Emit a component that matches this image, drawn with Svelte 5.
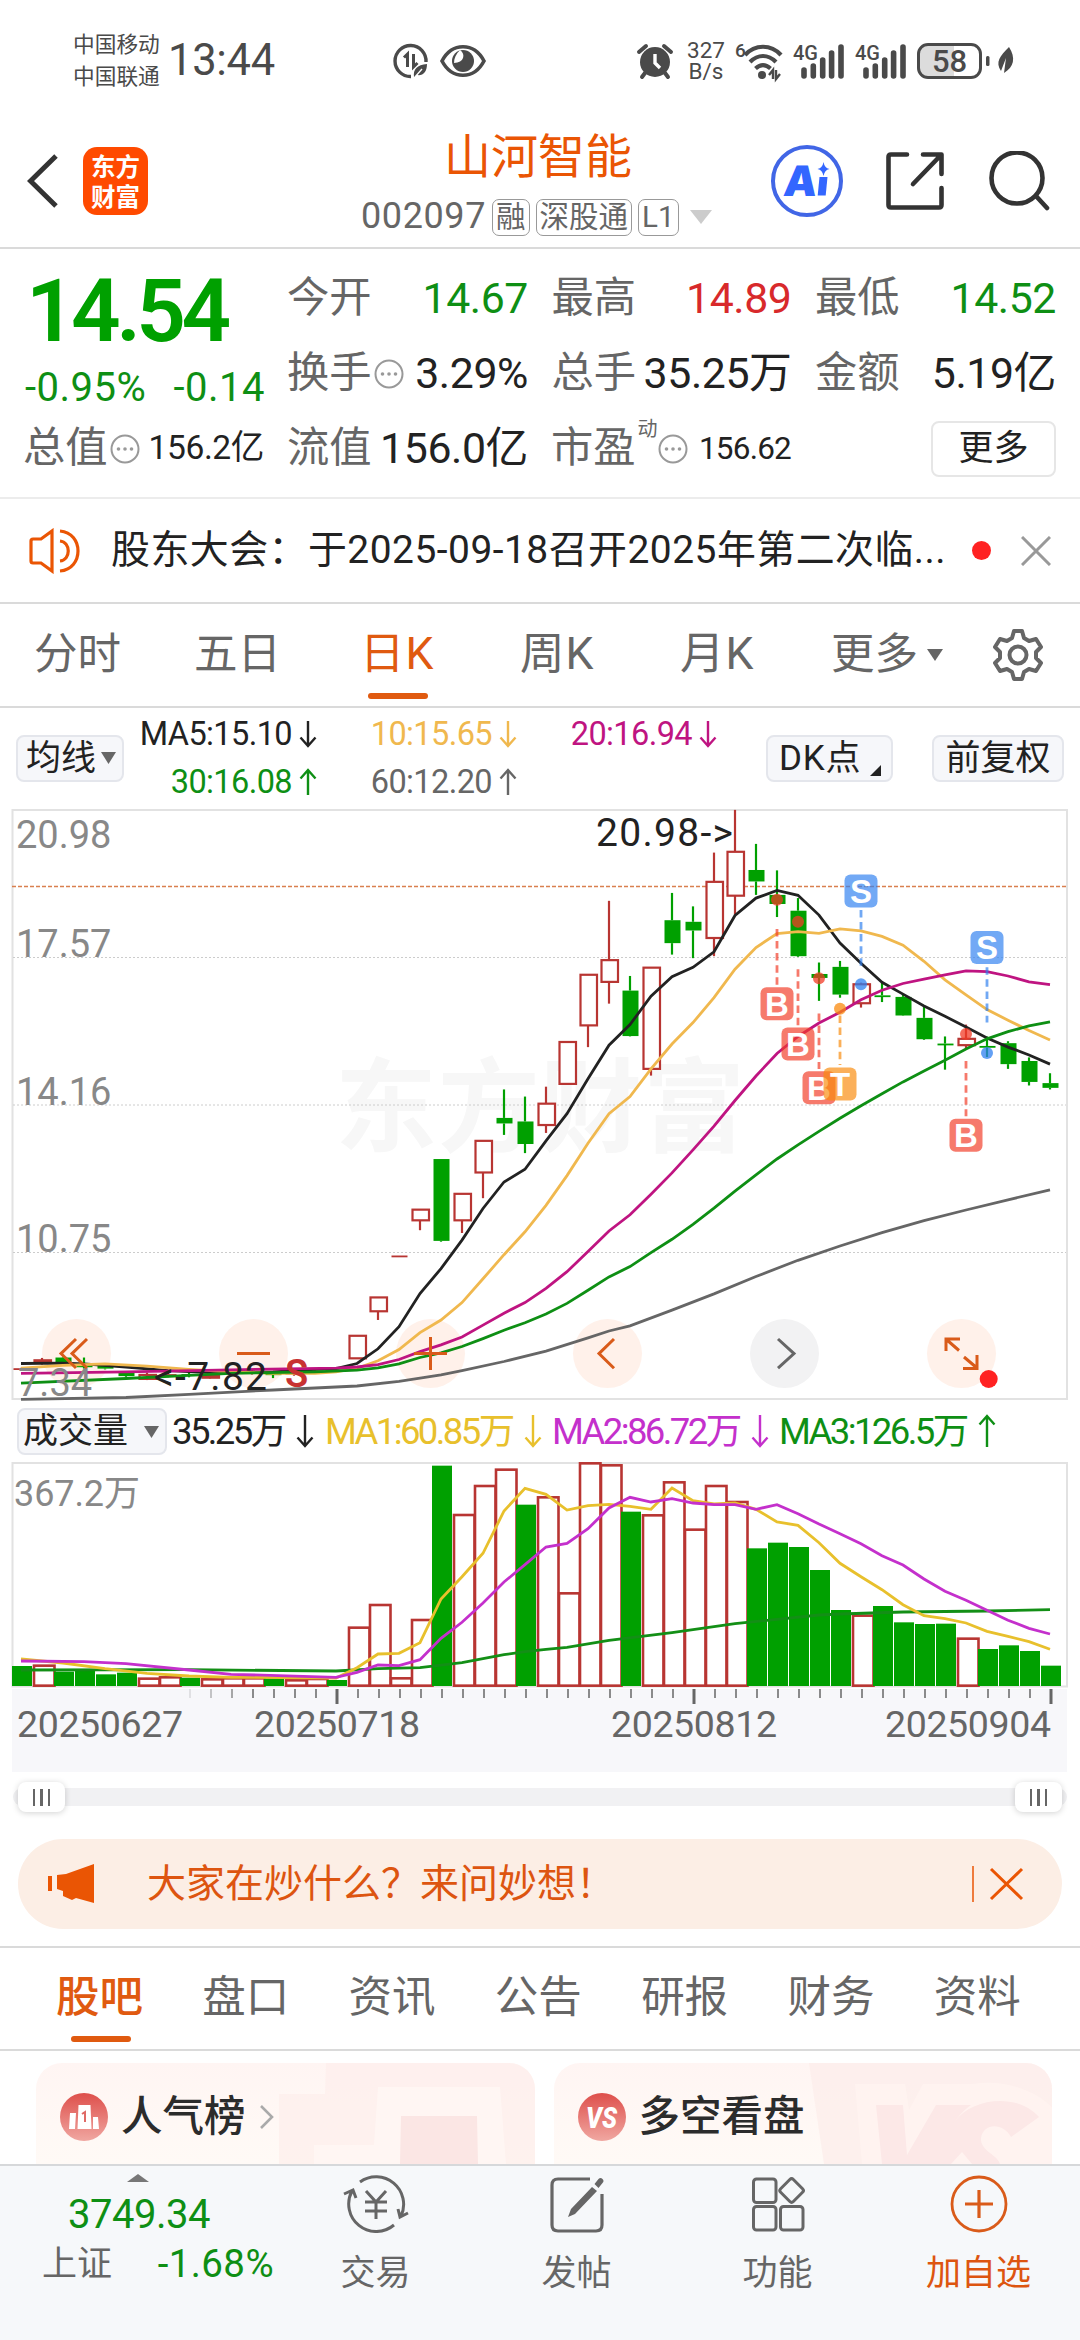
<script>
    const stats = [
        [
            { label: "今开", value: "14.67", tone: "green" },
            { label: "最高", value: "14.89", tone: "red" },
            { label: "最低", value: "14.52", tone: "green" },
        ],
        [
            { label: "换手", info: true, value: "3.29%" },
            { label: "总手", value: "35.25万" },
            { label: "金额", value: "5.19亿" },
        ],
    ];

    const periods = [
        { name: "分时", width: 160 },
        { name: "五日", width: 166 },
        { name: "日K", width: 160, active: true },
        { name: "周K", width: 160 },
        { name: "月K", width: 151 },
    ];

    const averages = [
        { text: "MA5:15.10", color: "#222", up: false },
        { text: "10:15.65", color: "#f0b84e", up: false },
        { text: "20:16.94", color: "#bf1481", up: false },
        { text: "30:16.08", color: "#0e8f14", up: true },
        { text: "60:12.20", color: "#666", up: true },
    ];

    const volumeAverages = [
        { text: "35.25万", color: "#222", width: 153 },
        { text: "MA1:60.85万", color: "#e8c02c", width: 227 },
        { text: "MA2:86.72万", color: "#c430cc", width: 227 },
        { text: "MA3:126.5万", color: "#0e8f14", width: 227, up: true },
    ];

    const sections = ["股吧", "盘口", "资讯", "公告", "研报", "财务", "资料"];

    const STEP = 21;
    const x = (i) => 21 + i * STEP;
    const py = (v) => v / 2.529;
    const vy = (v) => v / 3;

    // [up, high, body top, body bottom, low]
    const candles = [
        [1, 1436, 1437, 1439, 1440], [1, 1411, 1417, 1422, 1428], [0, 1408, 1410, 1424, 1426], [0, 1410, 1430, 1434, 1438],
        [0, 1426, 1430, 1438, 1440], [0, 1444, 1448, 1457, 1459], [1, 1448, 1454, 1464, 1467], [1, 1446, 1452, 1455, 1460],
        [0, 1442, 1452, 1454, 1460], [1, 1455, 1457, 1461, 1463], [0, 1440, 1446, 1449, 1455], [1, 1440, 1447, 1449, 1453],
        [0, 1444, 1450, 1453, 1462], [1, 1440, 1445, 1450, 1456], [1, 1438, 1443, 1446, 1450], [0, 1436, 1440, 1444, 1448],
        [1, 1355, 1355, 1412, 1412], [1, 1258, 1258, 1293, 1315], [1, 1152, 1152, 1154, 1154], [1, 1036, 1036, 1063, 1088],
        [0, 908, 908, 1115, 1117], [1, 996, 996, 1063, 1095], [1, 862, 862, 942, 1007], [0, 732, 804, 818, 847],
        [0, 750, 813, 870, 893], [1, 725, 768, 822, 842], [1, 612, 612, 718, 718], [1, 442, 442, 570, 625],
        [1, 255, 405, 460, 515], [0, 445, 482, 597, 598], [1, 424, 424, 680, 697], [0, 235, 304, 362, 391],
        [0, 269, 308, 330, 400], [1, 133, 207, 349, 395], [1, 25, 131, 242, 290], [0, 111, 177, 206, 240],
        [0, 178, 240, 263, 296], [0, 248, 280, 395, 397], [0, 411, 440, 450, 508], [0, 407, 422, 492, 500],
        [1, 462, 466, 514, 525], [0, 462, 494, 497, 511], [0, 490, 498, 545, 546], [0, 523, 551, 605, 607],
        [0, 598, 616, 619, 682], [1, 568, 604, 620, 628], [0, 598, 622, 626, 650], [0, 610, 615, 668, 680],
        [0, 651, 660, 713, 722], [0, 691, 716, 728, 732],
    ];

    const volumes = [
        798, 797, 815, 810, 823, 818, 836, 832, 833, 838, 835, 835, 835, 841, 837, 840, 683, 615, 835, 660, 197, 345, 258, 209,
        314, 292, 580, 190, 196, 335, 346, 247, 389, 258, 306, 445, 428, 441, 510, 630, 647, 618, 667, 672, 671, 716, 747, 736,
        753, 797,
    ];
    const volumeUp = new Set([1, 6, 7, 9, 10, 11, 13, 14, 16, 17, 18, 19, 21, 22, 23, 25, 26, 27, 28, 30, 31, 32, 33, 34, 40, 45]);

    // "index:value" pairs, an entry without an index follows the one before it
    function line(text, scale) {
        let i = -1;
        return text
            .split(" ")
            .map((part) => {
                const [a, b] = part.split(":");
                i = b === undefined ? i + 1 : Number(a);
                return `${x(i)},${scale(Number(b ?? a)).toFixed(1)}`;
            })
            .join(" ");
    }

    const priceLines = [
        { color: "#666", points: line("0:1516 5:1511 8:1503 12:1492 16:1482 18:1470 20:1454 21:1443 23:1420 25:1394 27:1360 28:1343 29:1330 31:1290 33:1249 35:1205 37:1164 39:1128 41:1094 43:1064 45:1037 47:1011 49:986", py) },
        { color: "#222", points: line("0:1425 2:1424 3:1426 5:1434 7:1443 9:1448 12:1446 14:1440 1438 1425 1388 1332 1248 1185 1113 1033 966 934 862 793 705 620 568 496 447 423 384 292 248 229 241 291 362 413 461 491 521 547 574 602 625 645 668", py) },
        { color: "#f0b84e", points: line("0:1437 2:1430 4:1426 6:1432 8:1440 10:1446 12:1450 14:1450 1446 1437 1418 1390 1347 1315 1271 1211 1150 1092 1025 950 868 793 750 680 617 563 500 428 373 338 333 337 326 331 345 367 408 455 493 530 557 583 607", py) },
        { color: "#bf1481", points: line("0:1450 5:1446 10:1441 15:1437 1434 1428 1415 1395 1378 1358 1328 1298 1271 1235 1193 1142 1090 1049 997 943 885 825 760 698 641 598 564 537 505 481 464 453 442 432 434 445 460 467", py) },
        { color: "#0e8f14", points: line("0:1475 5:1463 8:1455 10:1450 14:1446 16:1442 1436 1426 1410 1398 1382 1362 1341 1322 1300 1273 1240 1206 1180 1145 1111 1073 1032 989 948 908 872 838 805 773 743 713 685 658 630 604 586 571 561", py) },
    ];

    const volumeLines = [
        { color: "#138f16", points: line("0:810 8:809 15:813 17:806 19:803 21:788 23:764 755 748 742 28:721 31:698 34:671 36:658 38:645 39:642 42:636 46:633 49:629", vy) },
        { color: "#e8c02c", points: line("0:777 2:789 4:806 6:820 8:828 10:832 15:834 803 762 760 728 597 530 460 333 265 283 330 317 313 319 328 264 302 312 309 328 366 376 428 490 530 569 614 647 656 669 694 709 725 748", vy) },
        { color: "#c430cc", points: line("0:783 3:785 5:791 8:810 10:823 15:832 817 795 797 779 715 667 609 546 494 441 430 386 324 292 306 296 309 314 314 328 314 341 372 401 431 467 495 537 574 601 631 661 685 702", vy) },
    ];

    const RED = "#f23b26";
    const BLUE = "#2f80f0";
    const AMBER = "#f98a0c";
    const marks = [
        { i: 36, text: "B", color: RED, badge: 515, from: 326, to: 468, dot: 252 },
        { i: 37, text: "B", color: RED, badge: 617, from: 428, to: 570, dot: 308 },
        { i: 38, text: "B", color: RED, badge: 728, from: 540, to: 680, dot: 451 },
        { i: 39, text: "T", color: AMBER, badge: 718, from: 545, to: 670, dot: 528 },
        { i: 40, text: "S", color: BLUE, badge: 230, from: 278, to: 420, dot: 466 },
        { i: 45, text: "B", color: RED, badge: 848, from: 660, to: 800, dot: 592 },
        { i: 46, text: "S", color: BLUE, badge: 373, from: 423, to: 563, dot: 640 },
    ];

    const prices = [
        ["20.98", 847.5, 16], ["17.57", 957, 16], ["14.16", 1104.5, 16], ["10.75", 1252, 16], ["7.34", 1395.5, 18],
    ];
    const dates = [["20250627", 17], ["20250718", 254], ["20250812", 611], ["20250904", 885]];
    const longTicks = [15, 32, 49];
</script>

{#snippet arrow(up, height = 28)}
    <svg class="arrow" width="18" {height} viewBox="0 0 18 {height}" fill="none" stroke="currentColor" stroke-width="2.4">
        {#if up}
            <path d="M9 {height - 1}V2M1.500 10.500L9 2l7.500 8.500" />
        {:else}
            <path d="M9 1v{height - 3}M1.500 {height - 10.5}L9 {height - 2}l7.500-8.500" />
        {/if}
    </svg>
{/snippet}

{#snippet info()}
    <svg class="info" width="30" height="30" viewBox="0 0 30 30">
        <circle cx="15" cy="15" r="13.5" fill="none" stroke="#999" stroke-width="2" />
        <circle cx="8.5" cy="15" r="1.8" fill="#999" /><circle cx="15" cy="15" r="1.8" fill="#999" /><circle cx="21.5" cy="15" r="1.8" fill="#999" />
    </svg>
{/snippet}

{#snippet signal()}
    <svg class="signal" width="52" height="36" viewBox="0 0 52 36">
        <text x="0" y="17" font-size="21" textLength="25" lengthAdjust="spacingAndGlyphs">4G</text>
        <path d="M11 27v6M20.3 23v10M29.7 17v16M38.6 10v23M48 4v29" stroke="currentColor" stroke-width="5.6" stroke-linecap="round" />
    </svg>
{/snippet}

<div class="page">
    <div class="status">
        <div class="carriers"><span>中国移动</span><span>中国联通</span></div>
        <span class="clock">13:44</span>
        <svg class="data-icon" width="36" height="36" viewBox="0 0 36 36" fill="none" stroke="currentColor" stroke-width="3.4">
            <path d="M18 33.500A15.500 15.500 0 1 1 33 19" />
            <path d="M11 14.500L14.500 11v13M20.500 11v13l4-4" stroke-width="3" />
            <path d="M21 34c-1-8 3-12 13-13 0 8-4 12-10 11z" fill="currentColor" stroke="none" />
            <path d="M22 34l7-8" stroke="#fff" stroke-width="1.4" />
        </svg>
        <svg class="eye" width="46" height="34" viewBox="0 0 46 34">
            <path d="M2 17C12-2 34-2 44 17 34 36 12 36 2 17z" fill="none" stroke="currentColor" stroke-width="3.6" />
            <circle cx="23" cy="17" r="11" fill="currentColor" />
            <path d="M20 6c6 4 4 13-6 13 0-5 2-9 6-13z" fill="#fff" />
        </svg>
        <svg class="alarm" width="36" height="36" viewBox="0 0 36 36">
            <circle cx="18" cy="19" r="15" fill="currentColor" />
            <path d="M2 9l7-6M34 9l-7-6M8 30l-3 4M28 30l3 4" stroke="currentColor" stroke-width="4" stroke-linecap="round" />
            <path d="M18 11v9l5 5" fill="none" stroke="#fff" stroke-width="3.4" />
        </svg>
        <div class="speed"><span>327</span><span>B/s</span></div>
        <svg class="wifi" width="48" height="38" viewBox="0 0 48 38" fill="none" stroke="currentColor" stroke-width="4.200">
            <text x="0" y="15" font-size="19" stroke="none">6</text>
            <path d="M10 13c10-11 26-11 36 0M15 20c8-8 18-8 26 0M20.500 26.500c5-4.500 10-4.500 15 0" />
            <circle cx="27" cy="33" r="4" fill="currentColor" stroke="none" />
            <path d="M34 33l4-5v9M41 28v9l4-5" stroke-width="2.400" />
        </svg>
        {@render signal()}
        {@render signal()}
        <div class="battery"><span>58</span></div>
        <svg class="leaf" width="30" height="32" viewBox="0 0 30 32" fill="currentColor">
            <rect x="0" y="11" width="3.500" height="10" rx="1.500" />
            <path d="M23 2c7 11 5 20-5 26l2-15-5 13c-6-9-1-15 8-24z" />
        </svg>
    </div>

    <header>
        <svg class="back" width="32" height="56" viewBox="0 0 32 56" fill="none" stroke="#333" stroke-width="5"><path d="M29 3L3.500 28 29 53" /></svg>
        <div class="logo"><span>东方</span><span>财富</span></div>
        <div class="heading">
            <h1>山河智能</h1>
            <div class="code">
                <span class="number">002097</span><i>融</i><i>深股通</i><i>L1</i>
                <svg width="22" height="14"><path d="M0 0h22L11 14z" fill="#ccc" /></svg>
            </div>
        </div>
        <svg class="ai" width="74" height="74" viewBox="0 0 74 74">
            <circle cx="37" cy="37" r="34" fill="none" stroke="#4166e6" stroke-width="4" />
            <text class="ai-text" x="13" y="52" transform="skewX(-6) translate(5)">A</text>
            <path d="M49.500 33h8l-1.800 18.500h-8z" fill="#36f" />
            <path d="M53.500 18q1 6 6 7-5 1-6 7-1-6-6-7 5-1 6-7z" fill="#36f" />
        </svg>
        <svg class="share" width="60" height="60" viewBox="0 0 60 60" fill="none" stroke="#333" stroke-width="4.600" stroke-linecap="round" stroke-linejoin="round">
            <path d="M22 3.500H6q-2.500 0-2.500 2.500v48q0 2.500 2.500 2.500h48q2.500 0 2.500-2.500V37" />
            <path d="M38 3.500h18.500V23M56 4L28 33" />
        </svg>
        <svg class="search" width="62" height="60" viewBox="0 0 62 60" fill="none" stroke="#333" stroke-width="4.600" stroke-linecap="round">
            <circle cx="29" cy="27" r="25.500" /><path d="M48 45l11 12" />
        </svg>
    </header>

    <section class="quote">
        <div class="main">
            <div class="price">14.54</div>
            <div class="change"><span>-0.95%</span><span>-0.14</span></div>
        </div>
        <div class="stats">
            {#each stats as row}
                {#each row as item}
                    <div class="cell">
                        <span class="label">{item.label}</span>
                        {#if item.info}{@render info()}{/if}
                        <span class="value {item.tone}">{item.value}</span>
                    </div>
                {/each}
            {/each}
        </div>
        <div class="totals">
            <div class="cell"><span class="label">总值</span>{@render info()}<span class="value small">156.2亿</span></div>
            <div class="cell"><span class="label">流值</span><span class="value">156.0亿</span></div>
            <div class="cell"><span class="label">市盈</span><sup>动</sup>{@render info()}<span class="value ratio">156.62</span></div>
            <div class="cell"><button class="more">更多</button></div>
        </div>
    </section>

    <section class="notice">
        <svg width="52" height="46" viewBox="0 0 52 46" fill="none" stroke="#ea5504" stroke-width="3.200">
            <path d="M2 13q0-2 2-2h8L23 3v40L12 35H4q-2 0-2-2z" /><path d="M31 3c24 2 24 38 0 40M31 13c11 1 11 19 0 20" />
        </svg>
        <span class="text">股东大会：于2025-09-18召开2025年第二次临...</span>
        <span class="dot"></span>
        <svg width="30" height="30" viewBox="0 0 30 30" stroke="#999" stroke-width="3"><path d="M1 1l28 28M29 1L1 29" /></svg>
    </section>

    <nav class="periods">
        {#each periods as tab}
            <span class:active={tab.active} class:wide={tab.name.endsWith("K")} style="width: {tab.width}px">{tab.name}</span>
        {/each}
        <span class="last">更多<svg width="16" height="12"><path d="M0 0h16L8 12z" fill="#666" /></svg></span>
        <svg width="52" height="54" viewBox="0 0 52 54" fill="none" stroke="#666" stroke-width="4" stroke-linejoin="round">
            <path d="M22 3h8l2 7 5 3 7-2 5 8-5 5v6l5 5-5 8-7-2-5 3-2 7h-8l-2-7-5-3-7 2-5-8 5-5v-6l-5-5 5-8 7 2 5-3z" /><circle cx="26" cy="27" r="8.500" />
        </svg>
    </nav>

    <section class="indicator">
        <button class="chip ma">均线<svg width="15" height="12"><path d="M0 0h15L7.500 12z" fill="#666" /></svg></button>
        <div class="averages">
            {#each averages as item}
                <span style="color: {item.color}">{item.text}{@render arrow(item.up)}</span>
            {/each}
        </div>
        <button class="chip dk">DK点<svg width="11" height="11"><path d="M11 0v11H0z" fill="#222" /></svg></button>
        <button class="chip adjust">前复权</button>
    </section>

    <svg class="chart" width="1080" height="594" viewBox="0 8 1080 594">
        <text class="watermark" x="540" y="344" textLength="410">东方财富</text>
        <rect x="12.500" y="10" width="1054.500" height="589" fill="none" stroke="#e2e2e2" stroke-width="2" />
        {#each [157.5, 305, 452.5] as gy}
            <line x1="13" x2="1066" y1={gy} y2={gy} stroke="#ccc" stroke-dasharray="2 2" />
        {/each}
        <line x1="12" x2="1066" y1="86.500" y2="86.500" stroke="#d9804f" stroke-width="1.600" stroke-dasharray="4 2" />

        {#each [76.5, 253.5, 430.5, 607.5, 784.5, 961.5] as cx, n}
            <circle {cx} cy="553.600" r="34.500" fill={n === 4 ? "#f2f2f3" : "#fff1ea"} />
        {/each}

        {#each candles as [up, high, top, bottom, low], i}
            {@const color = up ? "#b83532" : "#00a000"}
            <line x1={x(i)} x2={x(i)} y1={py(high)} y2={py(top)} stroke={color} stroke-width="2.2" />
            <line x1={x(i)} x2={x(i)} y1={py(bottom)} y2={py(low)} stroke={color} stroke-width="2.2" />
            {#if up && bottom - top > 3}
                <rect x={x(i) - 7.500} y={py(top)} width="16.500" height={py(bottom - top)} fill="#fff" stroke={color} stroke-width="2.2" />
            {:else}
                <rect x={x(i) - 7.500} y={py(top)} width="16" height={Math.max(py(bottom - top), 1.8)} fill={color} />
            {/if}
        {/each}

        {#each priceLines as item}
            <polyline points={item.points} fill="none" stroke={item.color} stroke-width="2.800" />
        {/each}

        {#each marks as mark}
            <g fill={mark.color}>
                <line x1={x(mark.i)} x2={x(mark.i)} y1={py(mark.from)} y2={py(mark.to)} stroke={mark.color} stroke-width="2.800" stroke-dasharray="7.500 4.600" opacity=".68" />
                <circle cx={x(mark.i)} cy={py(mark.dot)} r="6" opacity=".75" />
                <rect x={x(mark.i) - 16.500} y={py(mark.badge) - 16.500} width="33" height="33" rx="6" opacity=".68" />
                <text class="badge" x={x(mark.i)} y={py(mark.badge) + 12}>{mark.text}</text>
            </g>
        {/each}

        {#each prices as [text, base, left]}
            <text class="axis" x={left} y={base - 800}>{text}</text>
        {/each}
        <text class="peak" x="596" y="45.500" textLength="137">20.98-&gt;</text>
        <text class="peak" x="154" y="590" textLength="113">&lt;-7.82</text>
        <text class="sell" x="285" y="587">S</text>

        <g class="tools" fill="none" stroke="#d95b1a" stroke-width="3">
            <path d="M76 539L61 553.600 76 568M87 539L72 553.600 87 568" />
            <path d="M237 553.600h33M414 553.600h33M430.500 537v33M614 539l-15 14.600 15 14.600" />
            <path d="M778 539l16 14.600-16 14.600" stroke="#666" />
            <path d="M946 551v-12h14M947 540l12 10.500M964 557l13 11M977 555v13.500h-14" />
        </g>
        <circle cx="988.700" cy="579" r="9" fill="#f22" />
    </svg>

    <section class="volume-head">
        <button class="chip vol">成交量<svg width="15" height="12"><path d="M0 0h15L7.500 12z" fill="#666" /></svg></button>
        {#each volumeAverages as item}
            <span style="color: {item.color}; width: {item.width}px">{item.text}{@render arrow(item.up, 34)}</span>
        {/each}
    </section>

    <svg class="chart" width="1080" height="311" viewBox="0 61 1080 311">
        <rect x="12" y="289" width="1055" height="83" fill="#f7f7fa" />
        <rect x="12.500" y="63" width="1054.500" height="223.500" fill="#fff" stroke="#e2e2e2" stroke-width="2" />
        {#each volumes as top, i}
            {#if volumeUp.has(i)}
                <rect x={12 + i * STEP + 1} y={vy(top)} width="20.500" height={vy(857 - top)} fill="#fff" stroke="#b83532" stroke-width="2.6" />
            {:else}
                <rect x={12 + i * STEP} y={vy(top)} width="20" height={vy(858 - top)} fill="#00a000" />
            {/if}
        {/each}
        {#each volumeLines as item}
            <polyline points={item.points} fill="none" stroke={item.color} stroke-width="2.800" />
        {/each}
        <text class="axis vol-max" x="14" y="106" textLength="126">367.2万</text>
        {#each { length: 42 } as _, n}
            {@const long = longTicks.includes(n + 8)}
            <line x1={x(n + 8) + 1} x2={x(n + 8) + 1} y1="289" y2={long ? 304 : 298} stroke="#666" stroke-width={long ? 3 : 1.5} opacity={Math.min(1, 0.2 + n * 0.27)} />
        {/each}
        {#each dates as [text, left]}
            <text class="date" x={left} y="337" textLength="166">{text}</text>
        {/each}
    </svg>

    <div class="slider">
        <div class="track">
            {#each [0, 1] as _}
                <span class="handle"><b></b><b></b><b></b></span>
            {/each}
        </div>
    </div>

    <div class="ask">
        <svg width="47" height="40" viewBox="0 0 47 40" fill="#ea5504">
            <rect x="0" y="12" width="4" height="15" /><path d="M46 0v39l-18-5-4 2-9-4v-5l-6-2V11l9-1z" />
        </svg>
        <span>大家在炒什么？来问妙想！</span>
        <svg width="52" height="36" viewBox="0 0 52 36" stroke="#ea5504" fill="none"><path d="M1 0v36" stroke-width="1.500" /><path d="M19 3l31 30M50 3L19 33" stroke-width="3" /></svg>
    </div>

    <nav class="sections">
        {#each sections as name, i}
            <span class:active={i === 0}>{name}</span>
        {/each}
    </nav>

    <div class="cards">
        <div class="card rank">
            <svg class="art" width="499" height="101" viewBox="0 0 499 101">
                <path d="M290 0h209v101H243V31h46z" fill="#fdeeeb" opacity=".7" /><path d="M278 82h60l4-58h122l6 77H278z" fill="#fff6f3" />
                <path d="M365 53h76l1 48h-78z" fill="#fbe6e4" />
            </svg>
            <svg width="48" height="48" viewBox="0 0 48 48">
                <defs><linearGradient id="red" x2="0" y2="1"><stop stop-color="#de4f4b" /><stop offset="1" stop-color="#f0a7a1" /></linearGradient></defs>
                <circle cx="24" cy="24" r="24" fill="url(#red)" />
                <path d="M10 20h6l-1 16H9zM18.500 12h12l1 24h-14zM33 24h5l1 12h-6z" fill="#fff" /><path d="M22 21l3-2v10" fill="none" stroke="#e06a66" stroke-width="2" />
            </svg>
            <strong>人气榜</strong>
            <svg class="chevron" width="14" height="24" viewBox="0 0 14 24" fill="none" stroke="#aaa" stroke-width="2.600"><path d="M1 1l11 11L1 23" /></svg>
        </div>
        <div class="card">
            <svg class="art" width="499" height="101" viewBox="0 0 499 101">
                <path d="M255 0h244v101H270z" fill="#fdeeeb" opacity=".8" />
                <path d="M301 21h50l4 26 14-26h50c35-6 68 10 80 25v55H308z" fill="#fff3f0" />
                <path d="M322 42h27l4 50 29-50h35q-17 12-21 30l-13 29H328z" fill="#fce8e7" />
                <path d="M362 101h35l11-12 10 12h28c-2-9-20-13-19-26 2-15 22-16 30-1l28-20c-21-24-66-20-84 4z" fill="#fce8e7" />
            </svg>
            <svg width="48" height="48" viewBox="0 0 48 48"><circle cx="24" cy="24" r="24" fill="url(#red)" /><text class="vs" x="8" y="35" textLength="31" lengthAdjust="spacingAndGlyphs">VS</text></svg>
            <strong>多空看盘</strong>
        </div>
    </div>

    <footer>
        <div class="index">
            <svg width="22" height="8"><path d="M0 8h22L11 0z" fill="#777" /></svg>
            <span class="points">3749.34</span>
            <div><span>上证</span><em>-1.68%</em></div>
        </div>
        <div class="action">
            <svg width="66" height="58" viewBox="0 0 66 58" fill="none" stroke="#666" stroke-width="3">
                <path d="M17 7A27.500 27.500 0 0 1 58 41M51 50A27.500 27.500 0 0 1 9 16M1 19l9-4 3 8M65 38l-8 4-2-8" />
                <path d="M23 16l10 11 10-11M22 27h22M22 36h22M33 27v17" />
            </svg>
            <span>交易</span>
        </div>
        <div class="action">
            <svg width="56" height="58" viewBox="0 0 56 58" fill="none" stroke="#666" stroke-width="3.200">
                <path d="M41 4H9q-6 0-6 6v40q0 6 6 6h38q6 0 6-6V19" />
                <path d="M43 12l5 4-22 23-7 3 3-8zM45.500 9l4-5q2-2 4 0t0 4l-4 5z" fill="#666" stroke="none" />
            </svg>
            <span>发帖</span>
        </div>
        <div class="action">
            <svg width="54" height="58" viewBox="0 0 54 58" fill="none" stroke="#666" stroke-width="3">
                <rect x="2.500" y="4" width="22.500" height="23.500" rx="3" /><rect x="2.500" y="31.500" width="22.500" height="23.500" rx="3" /><rect x="29.500" y="31.500" width="22.500" height="23.500" rx="3" />
                <rect x="31.600" y="6.500" width="18" height="18" rx="2.500" transform="rotate(45 40.600 15.500)" />
            </svg>
            <span>功能</span>
        </div>
        <div class="action add">
            <svg width="58" height="58" viewBox="0 0 58 58" fill="none" stroke="#d95b1a" stroke-width="2.800"><circle cx="29" cy="29" r="27" /><path d="M29 15v28M15 29h28" stroke-width="3.200" /></svg>
            <span>加自选</span>
        </div>
    </footer>
</div>

<style>
    :global(body) {
        margin: 0;
        background: #fff;
    }

    .page {
        width: 1080px;
        height: 2340px;
        overflow: hidden;
        background: #fff;
        color: #333;
        font-family: Roboto, "Noto Sans CJK SC", sans-serif;
        font-size: 40px;
        line-height: 1.2;
        white-space: nowrap;
    }

    .page * {
        box-sizing: border-box;
    }

    svg {
        display: block;
        flex: none;
    }

    .status {
        height: 122px;
        padding-left: 73px;
        display: flex;
        align-items: center;
        color: #4a4a4a;
    }

    .status svg {
        overflow: visible;
    }

    .status text {
        fill: #4a4a4a;
        font-weight: 500;
    }

    .carriers {
        display: flex;
        flex-direction: column;
        width: 95px;
        font-size: 21.7px;
        line-height: 32px;
    }

    .clock {
        width: 225px;
        font-size: 43.5px;
        letter-spacing: -0.3px;
    }

    .eye {
        margin-left: 11px;
    }

    .alarm {
        margin-left: 151px;
    }

    .speed {
        display: flex;
        flex-direction: column;
        align-items: center;
        width: 42px;
        margin: 0 8px 0 12px;
        font-size: 22.5px;
        line-height: 21.5px;
    }

    .signal {
        margin-left: 10px;
    }

    .battery {
        width: 65px;
        height: 36px;
        margin: 0 4px 0 10px;
        border: 3px solid #4a4a4a;
        border-radius: 11px;
        background: linear-gradient(90deg, #dcdcdc 58%, #fff 58%);
        font-size: 31px;
        line-height: 31px;
        text-align: center;
        font-weight: 500;
    }

    header {
        height: 127px;
        padding: 0 30px 7px 27px;
        display: flex;
        align-items: center;
        border-bottom: 2px solid #dadada;
    }

    .logo {
        width: 68px;
        height: 68px;
        margin-left: 24px;
        padding-top: 4px;
        border-radius: 14px;
        background: #ff4a00;
        color: #fff;
        font-family: "Noto Sans CJK SC", sans-serif;
        font-size: 24.5px;
        font-weight: 700;
        line-height: 30px;
        text-align: center;
        display: flex;
        flex-direction: column;
    }

    .heading {
        width: 354px;
        margin-left: 213px;
        padding-top: 12px;
    }

    h1 {
        width: 354px;
        margin: 0;
        font-size: 47px;
        font-weight: 400;
        line-height: 60px;
        color: #ea5504;
        text-align: center;
    }

    .code {
        display: flex;
        align-items: center;
        height: 60px;
        color: #666;
        font-size: 36px;
    }

    .code .number {
        width: 131px;
        letter-spacing: 0.6px;
    }

    .code i {
        margin-right: 6px;
        padding: 0 3px;
        height: 37px;
        border: 1.5px solid #999;
        border-radius: 7px;
        font-size: 29.5px;
        line-height: 34px;
        font-style: normal;
    }

    .code svg {
        margin-left: 5px;
    }

    .ai {
        margin-left: 55px;
    }

    .ai-text {
        fill: #36f;
        font: 900 42px Inter, sans-serif;
    }

    .share {
        margin-left: 41px;
    }

    .search {
        margin-left: 43px;
    }

    .quote {
        height: 250px;
        padding: 12px 24px 0 25px;
        display: grid;
        grid-template: 150px 75px / 264px 1fr;
        border-bottom: 2px solid #ececec;
    }

    .price {
        height: 76px;
        padding-left: 1px;
        color: #00a000;
        font-size: 87px;
        line-height: 101px;
        font-weight: 600;
        letter-spacing: -4.6px;
    }

    .change {
        display: flex;
        justify-content: space-between;
        width: 240px;
        padding-top: 28px;
        color: #0e8f14;
        font-size: 40px;
        line-height: 46px;
        letter-spacing: 0.5px;
    }

    .stats {
        display: grid;
        grid-template: 75px 75px / 239px 238px 239px;
        gap: 0 25.5px;
    }

    .totals {
        grid-column: 1 / 3;
        display: grid;
        grid-template: 75px / 239px 239px 238px 240px;
        gap: 0 25px;
    }

    .cell {
        display: flex;
        align-items: center;
    }

    .label {
        margin-left: -2px;
        color: #666;
        font-size: 42.3px;
    }

    .info {
        margin-left: 2px;
    }

    .value {
        margin-left: auto;
        color: #222;
        font-size: 42.8px;
        letter-spacing: -0.4px;
    }

    .value.green {
        color: #0e8f14;
    }

    .value.red {
        color: #d8292b;
    }

    .value.small {
        font-size: 33.6px;
    }

    .value.ratio {
        font-size: 31.5px;
        letter-spacing: -0.8px;
    }

    sup {
        align-self: flex-start;
        margin: 5px -2px 0 2px;
        color: #666;
        font-size: 20px;
        line-height: 26px;
        vertical-align: baseline;
    }

    button {
        padding: 0;
        font-family: inherit;
        color: #222;
    }

    .more {
        width: 125px;
        height: 56px;
        margin-left: auto;
        border: 2px solid #e6e6e6;
        border-radius: 8px;
        background: #fff;
        font-size: 35px;
        line-height: 50px;
    }

    .notice {
        height: 105px;
        padding: 0 29px 0 29px;
        display: flex;
        align-items: center;
        border-bottom: 2px solid #dadada;
    }

    .notice .text {
        width: 861px;
        margin-left: 30px;
        color: #222;
        font-size: 38.9px;
        letter-spacing: 0.5px;
    }

    .notice .dot {
        width: 19px;
        height: 19px;
        margin-right: 30px;
        border-radius: 50%;
        background: #f22;
    }

    .periods {
        height: 104px;
        padding-left: 34px;
        display: flex;
        align-items: center;
        border-bottom: 2px solid #dadada;
        color: #666;
        font-size: 43.5px;
    }

    .periods span {
        position: relative;
    }

    .periods .wide {
        font-size: 44.5px;
        letter-spacing: 1px;
    }

    .periods .last {
        display: flex;
        align-items: center;
        width: 161px;
        gap: 9px;
    }

    .periods .active,
    .sections .active {
        color: #e05a10;
    }

    .periods .active::after,
    .sections .active::after {
        content: "";
        position: absolute;
        left: 8px;
        bottom: -17px;
        width: 60px;
        height: 6px;
        border-radius: 3px;
        background: #e05a10;
    }

    .indicator {
        height: 100px;
        padding: 0 16px;
        display: flex;
        align-items: center;
    }

    .chip {
        display: flex;
        align-items: center;
        height: 47px;
        border: 2px solid #e4e6ec;
        border-radius: 8px;
        background: #f6f7fa;
        font-size: 35px;
        line-height: 43px;
    }

    .ma {
        width: 108px;
        padding-left: 8px;
        gap: 5px;
    }

    .dk {
        width: 127px;
        padding-left: 11px;
        gap: 9px;
        letter-spacing: 0.8px;
    }

    .dk svg {
        margin-top: 24px;
    }

    .adjust {
        width: 132px;
        margin-left: 39px;
        justify-content: center;
    }

    .averages {
        width: 642px;
        display: grid;
        grid-template: 48px 48px / 193px 200px 200px;
        color: #222;
        font-size: 32.5px;
    }

    .averages span {
        display: flex;
        align-items: center;
        justify-content: flex-end;
        gap: 7px;
        letter-spacing: -0.6px;
    }

    .watermark {
        fill: #f7f7f7;
        font: 700 102px "Noto Sans CJK SC", sans-serif;
        text-anchor: middle;
    }

    .badge {
        fill: #fff;
        font: 700 33px "Liberation Sans", sans-serif;
        text-anchor: middle;
    }

    .axis {
        fill: #888;
        font-size: 38px;
    }

    .vol-max {
        font-size: 36px;
    }

    .peak {
        fill: #222;
        font-size: 39px;
    }

    .sell {
        fill: #c83232;
        font: 600 38px Roboto, sans-serif;
    }

    .date {
        fill: #666;
        font-size: 37.5px;
    }

    .volume-head {
        height: 59px;
        padding-left: 17px;
        display: flex;
        align-items: center;
    }

    .vol {
        width: 150px;
        margin-right: 5px;
        padding-left: 4px;
        gap: 16px;
    }

    .volume-head > span {
        display: flex;
        align-items: center;
        gap: 11px;
        font-size: 36.5px;
        letter-spacing: -2.6px;
    }

    .slider {
        height: 50px;
        padding: 16px 13px;
    }

    .track {
        height: 18px;
        padding: 0 5px;
        display: flex;
        align-items: center;
        justify-content: space-between;
        border-radius: 9px;
        background: #f1f1f3;
    }

    .handle {
        display: flex;
        align-items: center;
        justify-content: center;
        gap: 5px;
        width: 47px;
        height: 30px;
        border-radius: 8px;
        background: #fff;
        box-shadow: 0 1px 6px rgba(0, 0, 0, 0.18);
    }

    .handle b {
        width: 2.5px;
        height: 17px;
        background: #666;
    }

    .ask {
        height: 90px;
        margin: 17px 18px;
        padding: 0 38px 0 30px;
        display: flex;
        align-items: center;
        border-radius: 45px;
        background: #fceee5;
        color: #dd5510;
        font-size: 39px;
    }

    .ask span {
        flex: 1;
        margin-left: 52px;
    }

    .sections {
        height: 105px;
        padding-left: 56px;
        display: flex;
        align-items: center;
        border: solid #dadada;
        border-width: 2px 0;
        color: #666;
        font-size: 43.5px;
    }

    .sections span {
        position: relative;
        width: 146.6px;
    }

    .sections .active {
        font-weight: 500;
    }

    .sections .active::after {
        left: 15px;
    }

    .cards {
        height: 113px;
        padding: 12px 28px 0 36px;
        display: flex;
        gap: 19px;
        overflow: hidden;
    }

    .card {
        position: relative;
        width: 499px;
        height: 150px;
        padding: 30px 24px;
        display: flex;
        align-items: flex-start;
        overflow: hidden;
        border-radius: 26px;
        background: linear-gradient(#fff5f3, #fffaf6 100px);
    }

    .card > * {
        position: relative;
    }

    .card .art {
        position: absolute;
        left: 0;
        top: 0;
    }

    .card strong {
        margin-left: 13px;
        color: #2c2c2c;
        font-size: 41.5px;
        font-weight: 500;
        line-height: 48px;
    }

    .card .chevron {
        margin: 12px 0 0 14px;
    }

    .vs {
        fill: #fff;
        font: italic 900 30px Roboto, sans-serif;
    }

    footer {
        height: 176px;
        display: flex;
        border-top: 2px solid #d6d8da;
        background: #f6f8fa;
        color: #666;
        font-size: 35px;
    }

    .index {
        width: 275px;
        padding: 8px 0 0 42px;
    }

    .index svg {
        margin-left: 85px;
    }

    .points {
        display: block;
        margin-top: 8px;
        padding-left: 26px;
        color: #0e8f14;
        font-size: 40px;
        line-height: 50px;
        letter-spacing: -0.5px;
    }

    .index div {
        display: flex;
        justify-content: space-between;
        align-items: center;
        height: 50px;
        margin-right: 1px;
    }

    em {
        margin-top: -2px;
        color: #0e8f14;
        font-size: 38.5px;
        font-style: normal;
        letter-spacing: 0.4px;
    }

    .action {
        display: flex;
        flex-direction: column;
        align-items: center;
        width: 201px;
        padding-top: 9px;
    }

    .action span {
        margin-top: 14px;
        line-height: 54px;
    }

    .add {
        color: #dd5510;
    }
</style>
